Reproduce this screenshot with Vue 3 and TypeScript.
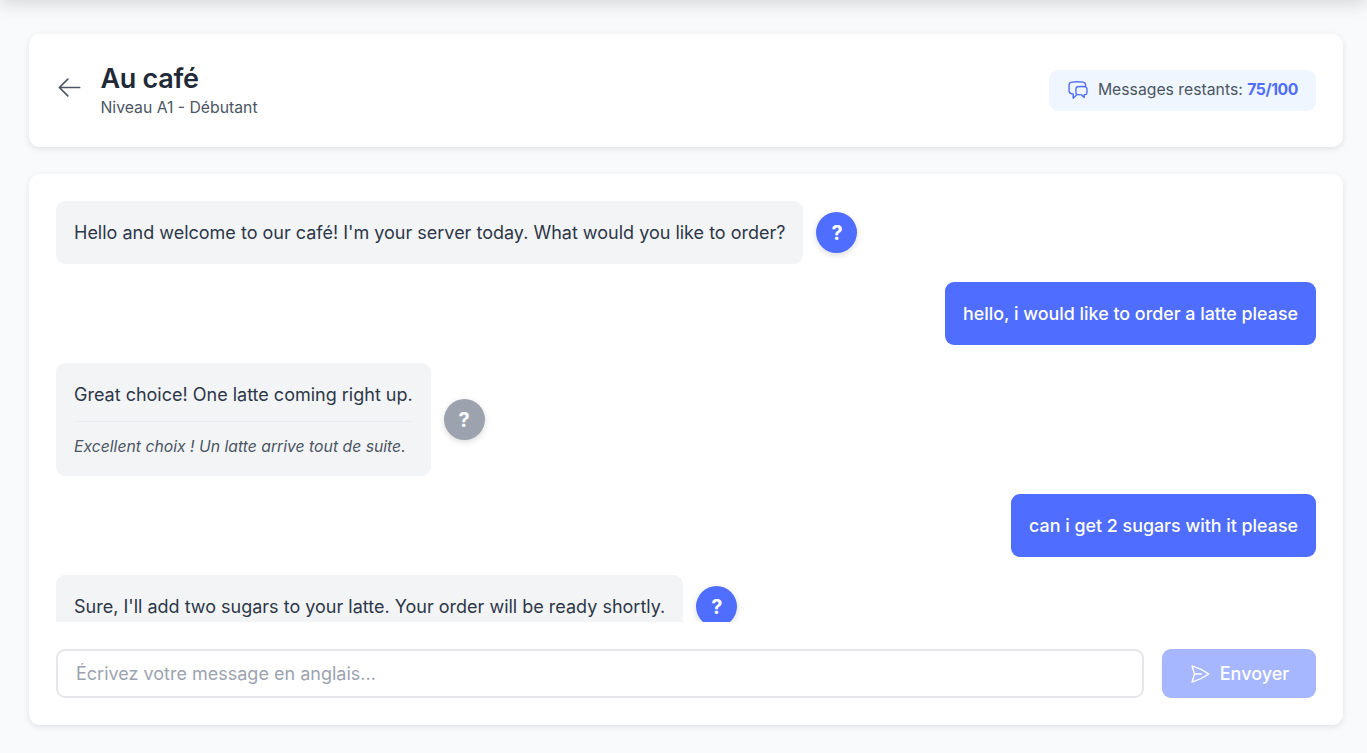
<script setup lang="ts">
interface Message {
  id: number
  from: 'bot' | 'user'
  text: string
  translation?: string
  active?: boolean
}

const messages: Message[] = [
  { id: 1, from: 'bot', text: "Hello and welcome to our café! I'm your server today. What would you like to order?" },
  { id: 2, from: 'user', text: 'hello, i would like to order a latte please' },
  { id: 3, from: 'bot', text: 'Great choice! One latte coming right up.', translation: 'Excellent choix ! Un latte arrive tout de suite.', active: true },
  { id: 4, from: 'user', text: 'can i get 2 sugars with it please' },
  { id: 5, from: 'bot', text: "Sure, I'll add two sugars to your latte. Your order will be ready shortly." }
]
</script>

<template>
  <div class="page">
    <div class="topbar"></div>
    <main class="content">
      <header class="card header">
        <div class="heading">
          <button class="back" type="button" aria-label="Retour">
            <svg viewBox="0 0 24 24" width="27" height="27" fill="none" stroke="currentColor" stroke-width="1.5" stroke-linecap="round" stroke-linejoin="round">
              <path d="M10.5 19.5L3 12m0 0l7.5-7.5M3 12h18" />
            </svg>
          </button>
          <div>
            <h1>Au café</h1>
            <p>Niveau A1 - Débutant</p>
          </div>
        </div>
        <div class="quota">
          <svg viewBox="0 0 24 24" width="22" height="22" fill="none" stroke="currentColor" stroke-width="1.5" stroke-linecap="round" stroke-linejoin="round">
            <path d="M20.25 8.511c.884.284 1.5 1.128 1.5 2.097v4.286c0 1.136-.847 2.1-1.98 2.193-.34.027-.68.052-1.02.072v3.091l-3-3c-1.354 0-2.694-.055-4.02-.163a2.115 2.115 0 01-.825-.242m9.345-8.334a2.126 2.126 0 00-.476-.095 48.64 48.64 0 00-8.048 0c-1.131.094-1.976 1.057-1.976 2.192v4.286c0 .837.46 1.58 1.155 1.951m9.345-8.334V6.637c0-1.621-1.152-3.026-2.76-3.235A48.455 48.455 0 0011.25 3c-2.115 0-4.198.137-6.24.402-1.608.209-2.76 1.614-2.76 3.235v6.226c0 1.621 1.152 3.026 2.76 3.235.577.075 1.157.14 1.74.194V21l4.155-4.155" />
          </svg>
          <span>Messages restants: <strong>75/100</strong></span>
        </div>
      </header>

      <section class="card chat">
        <div class="messages">
          <div v-for="m in messages" :key="m.id" class="row" :class="m.from">
            <div class="bubble">
              <div>{{ m.text }}</div>
              <div v-if="m.translation" class="translation">{{ m.translation }}</div>
            </div>
            <button v-if="m.from === 'bot'" class="help" :class="{ active: m.active }" type="button">?</button>
          </div>
        </div>
        <form class="composer" @submit.prevent>
          <input type="text" placeholder="Écrivez votre message en anglais..." />
          <button class="send" type="submit" disabled>
            <svg viewBox="0 0 24 24" width="22" height="22" fill="none" stroke="currentColor" stroke-width="1.5" stroke-linecap="round" stroke-linejoin="round">
              <path d="M6 12L3.269 3.126A59.768 59.768 0 0121.485 12 59.77 59.77 0 013.27 20.876L5.999 12zm0 0h7.5" />
            </svg>
            <span>Envoyer</span>
          </button>
        </form>
      </section>
    </main>
  </div>
</template>

<style>
html, body {
  margin: 0;
  height: 100%;
  overflow: hidden;
  background: #f9fafb;
}
</style>

<style scoped>
* {
  box-sizing: border-box;
}
.page {
  height: 753px;
  display: flex;
  flex-direction: column;
  background: #f9fafb;
  font-family: Inter, "Liberation Sans", sans-serif;
  color: #1f2937;
  overflow: hidden;
}
.topbar {
  height: 40px;
  flex: none;
  margin-top: -40px;
  box-shadow: 0 5px 16px rgba(0, 0, 0, 0.13);
}
.content {
  flex: 1;
  min-height: 0;
  display: flex;
  flex-direction: column;
  gap: 27px;
  padding: 34px 24px 28px 29px;
}
.card {
  background: #fff;
  border-radius: 11px;
  box-shadow: 0 2px 6px rgba(0, 0, 0, 0.1);
}
.header {
  height: 113px;
  flex: none;
  display: flex;
  align-items: center;
  justify-content: space-between;
  padding: 0 27px;
}
.heading {
  display: flex;
  align-items: center;
  gap: 17.5px;
}
.back {
  display: flex;
  padding: 0;
  border: 0;
  background: none;
  color: #4b5563;
  margin-top: -7px;
}
h1 {
  margin: 0;
  font-size: 27px;
  line-height: 32px;
  font-weight: 600;
  letter-spacing: -0.3px;
  color: #1f2937;
}
p {
  margin: 1px 0 0;
  font-size: 15.75px;
  line-height: 23px;
  color: #4b5563;
}
.quota {
  height: 41px;
  display: flex;
  align-items: center;
  gap: 9px;
  padding: 0 18px 2px;
  border-radius: 9px;
  background: #eff6ff;
  font-size: 15.75px;
  color: #4b5563;
}
.quota svg {
  color: #4f6dff;
}
.quota strong {
  color: #4f6dff;
  font-weight: 700;
  letter-spacing: -0.4px;
}
.chat {
  flex: 1;
  min-height: 0;
  display: flex;
  flex-direction: column;
  padding: 27px;
}
.messages {
  flex: 1;
  min-height: 0;
  overflow: hidden;
  display: flex;
  flex-direction: column;
  gap: 18px;
}
.row {
  display: flex;
  align-items: center;
  gap: 13px;
  flex: none;
}
.row.user {
  justify-content: flex-end;
}
.bubble {
  padding: 18px;
  border-radius: 9px;
  font-size: 18px;
  line-height: 27px;
}
.bot .bubble {
  background: #f3f4f6;
  color: #2d3748;
}
.user .bubble {
  background: #4f6dff;
  color: #fff;
  font-size: 17.85px;
  font-weight: 500;
}
.translation {
  margin-top: 13px;
  padding-top: 13px;
  border-top: 1px solid #ebecef;
  font-size: 15.75px;
  line-height: 23px;
  font-style: italic;
  color: #4b5563;
}
.help {
  width: 41px;
  height: 41px;
  flex: none;
  padding: 0;
  border: 0;
  border-radius: 50%;
  background: #4f6dff;
  color: #fff;
  font-family: inherit;
  font-size: 20px;
  font-weight: 700;
  box-shadow: 0 2px 6px rgba(0, 0, 0, 0.15);
}
.help.active {
  background: #9ca3af;
}
.composer {
  flex: none;
  display: flex;
  gap: 18px;
  margin-top: 27px;
}
input {
  flex: 1;
  min-width: 0;
  height: 49px;
  padding: 0 18px 1px;
  border: 2px solid #e5e7eb;
  border-radius: 9px;
  font-family: inherit;
  font-size: 18px;
  color: #1f2937;
  outline: none;
}
input::placeholder {
  color: #9ca3af;
}
.send {
  width: 154px;
  height: 49px;
  flex: none;
  display: flex;
  align-items: center;
  justify-content: center;
  gap: 9px;
  border: 0;
  border-radius: 9px;
  background: #a7b7ff;
  color: #fff;
  font-family: inherit;
  font-size: 18px;
  font-weight: 500;
}
</style>
